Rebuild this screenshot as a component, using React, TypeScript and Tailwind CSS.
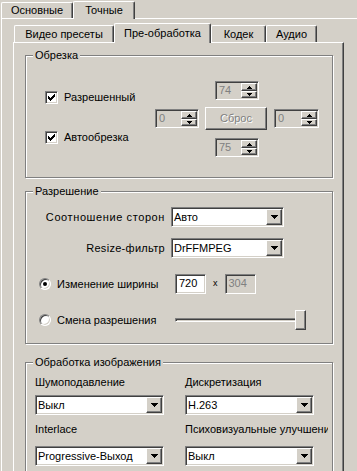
import React from "react";

const sunken =
  "border border-t-[#808080] border-l-[#808080] border-b-white border-r-white shadow-[inset_1px_1px_0_#404040,inset_-1px_-1px_0_#d4d0c8]";
const raised =
  "border border-t-white border-l-white border-b-[#404040] border-r-[#404040] shadow-[inset_-1px_-1px_0_#808080]";
const etched =
  "border border-[#808080] shadow-[inset_1px_1px_0_#ffffff,1px_1px_0_#ffffff]";

// staircase triangle so edges stay crisp
function Tri({ up = false, w = 7 }: { up?: boolean; w?: number }) {
  const rows = Math.ceil(w / 2);
  return (
    <svg width={w} height={rows} shapeRendering="crispEdges">
      {Array.from({ length: rows }).map((_, i) => {
        const y = up ? rows - 1 - i : i;
        return <rect key={i} x={i} y={y} width={w - 2 * i} height={1} fill="#000" />;
      })}
    </svg>
  );
}

function Tab({
  label,
  active,
  className,
}: {
  label: string;
  active?: boolean;
  className: string;
}) {
  return (
    <div
      className={`${className} flex items-center justify-center rounded-t-[2px] border-t border-l border-r border-t-white border-l-white border-r-[#404040] shadow-[inset_-1px_0_0_#808080] bg-[#d4d0c8] ${
        active ? "relative z-10 -mb-[1px] pb-[1px]" : ""
      }`}
    >
      {label}
    </div>
  );
}

function Group({
  title,
  className,
  children,
}: {
  title: string;
  className: string;
  children: React.ReactNode;
}) {
  return (
    <div className={`${etched} ${className} w-[308px]`}>
      <div className="-mt-[7px] ml-[7px] w-fit bg-[#d4d0c8] px-[2px] leading-[13px]">{title}</div>
      {children}
    </div>
  );
}

function Check({ label }: { label: string }) {
  return (
    <div className="flex h-[13px] items-center gap-[6px]">
      <div className={`${sunken} flex h-[13px] w-[13px] items-center justify-center bg-white`}>
        <svg width="7" height="7" viewBox="0 0 7 7" shapeRendering="crispEdges">
          <path d="M0 2h1v1h1v1h1v-1h1v-1h1v-1h1v-1h1v3h-1v1h-1v1h-1v1h-1v1h-1v-1h-1v-1h-1v-1h-1z" fill="#000" />
        </svg>
      </div>
      <span className="leading-[13px]">{label}</span>
    </div>
  );
}

function Radio({ on }: { on?: boolean }) {
  return (
    <div className="flex h-[12px] w-[12px] items-center justify-center rounded-full border border-t-[#808080] border-l-[#808080] border-b-white border-r-white bg-white shadow-[inset_1px_1px_0_#404040,inset_-1px_-1px_0_#d4d0c8]">
      {on && <div className="h-[4px] w-[4px] rounded-full bg-black" />}
    </div>
  );
}

function Spin({ value, className }: { value: string; className: string }) {
  return (
    <div className={`${sunken} ${className} flex h-[19px] bg-[#d4d0c8] p-[1px]`}>
      <div className="flex-1 pl-[2px] leading-[15px] text-[#808080]">{value}</div>
      <div className="flex w-[16px] flex-col">
        <div className={`${raised} flex h-[8px] items-center justify-center`}>
          <Tri up w={5} />
        </div>
        <div className={`${raised} flex h-[7px] items-center justify-center`}>
          <Tri w={5} />
        </div>
      </div>
    </div>
  );
}

function Select({ value, className }: { value: string; className: string }) {
  return (
    <div className={`${sunken} ${className} flex h-[20px] bg-white p-[1px]`}>
      <div className="flex-1 pl-[1px] leading-[16px]">{value}</div>
      <div className={`${raised} flex w-[16px] items-center justify-center bg-[#d4d0c8]`}>
        <Tri w={7} />
      </div>
    </div>
  );
}

function Edit({ value, disabled, className }: { value: string; disabled?: boolean; className: string }) {
  return (
    <div
      className={`${sunken} ${className} h-[20px] pl-[3px] leading-[16px] ${
        disabled ? "bg-[#d4d0c8] text-[#808080]" : "bg-white"
      }`}
    >
      {value}
    </div>
  );
}

export default function App() {
  return (
    <div className="h-[471px] w-[357px] overflow-hidden bg-[#d4d0c8] font-['Liberation_Sans',Arial,sans-serif] text-[11px] text-black">
      {/* outer tabs */}
      <div className="flex h-[18px] items-end pl-[1px]">
        <Tab label="Основные" className="h-[16px] w-[72px]" />
        <Tab label="Точные" active className="h-[18px] w-[62px]" />
      </div>

      <div className="ml-[1px] h-[453px] border-t border-l border-white pl-[11px] pt-[3px]">
        {/* inner tabs */}
        <div className="flex h-[20px] items-end pl-[1px]">
          <Tab label="Видео пресеты" className="h-[17px] w-[100px]" />
          <Tab label="Пре-обработка" active className="h-[20px] w-[97px]" />
          <Tab label="Кодек" className="h-[17px] w-[55px]" />
          <Tab label="Аудио" className="h-[17px] w-[51px]" />
        </div>

        <div className="h-[430px] w-[331px] border-t border-l border-r border-t-white border-l-white border-r-[#404040] pl-[11px] pt-[12px] shadow-[inset_-1px_0_0_#808080]">
          <Group title="Обрезка" className="h-[123px]">
            <div className="flex pl-[19px]">
              <div className="flex w-[110px] flex-col gap-[27px] pt-[29px]">
                <Check label="Разрешенный" />
                <Check label="Автообрезка" />
              </div>
              <div className="flex flex-col pt-[19px]">
                <Spin value="74" className="ml-[60px] w-[44px]" />
                <div className="mt-[7px] flex h-[23px] items-center">
                  <Spin value="0" className="w-[44px]" />
                  <div
                    className={`${raised} ml-[6px] flex h-[23px] w-[62px] items-center justify-center text-[#808080] [text-shadow:1px_1px_0_#fff]`}
                  >
                    Сброс
                  </div>
                  <Spin value="0" className="ml-[7px] w-[45px]" />
                </div>
                <Spin value="75" className="ml-[60px] mt-[8px] w-[44px]" />
              </div>
            </div>
          </Group>

          <Group title="Разрешение" className="mt-[13px] h-[153px]">
            <div className="flex flex-col pt-[9px]">
              <div className="flex h-[20px] items-center gap-[6px]">
                <div className="w-[139px] text-right tracking-[0.6px]">Соотношение сторон</div>
                <Select value="Авто" className="w-[113px]" />
              </div>
              <div className="mt-[11px] flex h-[20px] items-center gap-[6px]">
                <div className="w-[139px] text-right tracking-[0.3px]">Resize-фильтр</div>
                <Select value="DrFFMPEG" className="w-[113px]" />
              </div>
              <div className="mt-[16px] flex h-[20px] items-center pl-[13px]">
                <div className="flex w-[136px] items-center gap-[6px]">
                  <Radio on />
                  <span>Изменение ширины</span>
                </div>
                <Edit value="720" className="w-[31px]" />
                <span className="mx-[7px] text-[9px]">x</span>
                <Edit value="304" disabled className="w-[31px]" />
              </div>
              <div className="mt-[16px] flex h-[20px] items-center pl-[13px]">
                <div className="flex w-[136px] items-center gap-[6px]">
                  <Radio />
                  <span>Смена разрешения</span>
                </div>
                <div className="flex h-[20px] w-[131px] items-center">
                  <div className="h-[4px] flex-1 border border-t-[#808080] border-l-[#808080] border-b-white border-r-white shadow-[inset_1px_1px_0_#404040]" />
                  <div className={`${raised} -ml-[1px] h-[20px] w-[11px] bg-[#d4d0c8]`} />
                </div>
              </div>
            </div>
          </Group>

          <Group title="Обработка изображения" className="mt-[18px] h-[130px]">
            <div className="grid grid-cols-[150px_150px] pl-[9px] pt-[7px]">
              <div className="flex flex-col">
                <div className="h-[13px] leading-[13px]">Шумоподавление</div>
                <Select value="Выкл" className="mt-[6px] w-[129px]" />
                <div className="mt-[8px] h-[13px] leading-[13px]">Interlace</div>
                <Select value="Progressive-Выход" className="mt-[10px] w-[129px]" />
              </div>
              <div className="flex flex-col">
                <div className="h-[13px] leading-[13px]">Дискретизация</div>
                <Select value="H.263" className="mt-[6px] w-[129px]" />
                <div className="mt-[8px] h-[13px] w-[143px] overflow-hidden whitespace-nowrap leading-[13px]">
                  Психовизуальные улучшения
                </div>
                <Select value="Выкл" className="mt-[10px] w-[129px]" />
              </div>
            </div>
          </Group>
        </div>
      </div>
    </div>
  );
}
